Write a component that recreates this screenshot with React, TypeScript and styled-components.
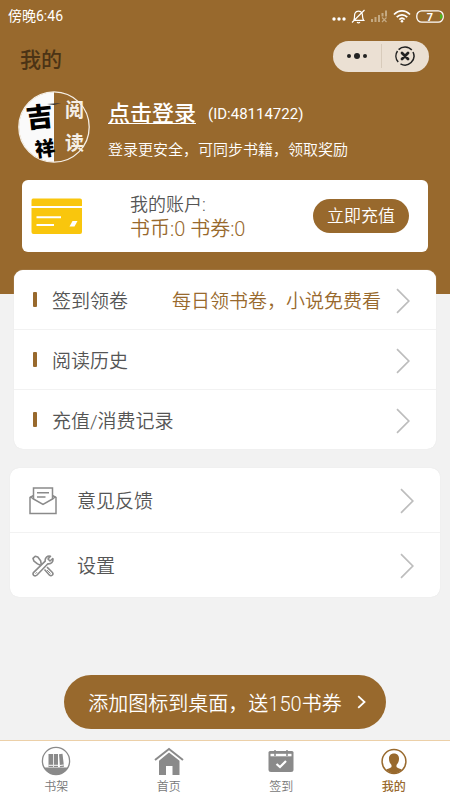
import React from "react";
import styled, { createGlobalStyle } from "styled-components";

const BROWN = "#98692d";
const PAGE = "#f2f2f2";
const GREY = "#8a8a8a";

const GlobalStyle = createGlobalStyle`
  * { box-sizing: border-box; }
  body {
    margin: 0;
    background: ${PAGE};
    font-family: Roboto, "Noto Sans CJK SC", sans-serif;
    color: #555;
  }
  button { font: inherit; color: inherit; border: 0; background: none; padding: 0; cursor: pointer; }
  a { color: inherit; text-decoration: none; }
  h1, p { margin: 0; font-weight: 400; }
  svg { display: block; flex: none; }
`;

const Page = styled.div`
  min-height: 100vh;
  display: flex;
  flex-direction: column;
`;

const Hero = styled.header`
  background: ${BROWN};
  color: #fff;
  padding-bottom: 42px;
`;

const StatusBar = styled.div`
  height: 32px;
  padding: 0 6px 0 8px;
  display: flex;
  align-items: center;
  justify-content: space-between;
  font-size: 14px;
  line-height: 20px;
`;

const StatusIcons = styled.div`
  display: flex;
  align-items: center;
  gap: 5px;
`;

const TitleBar = styled.div`
  height: 48px;
  padding: 0 21px 0 20px;
  display: flex;
  align-items: center;
  justify-content: space-between;
`;

const Title = styled.h1`
  && { font-size: 21px; font-weight: 500; }
  line-height: 28px;
  padding-top: 8px;
  color: #4b3315;
`;

const Capsule = styled.div`
  width: 96px;
  height: 31px;
  border-radius: 16px;
  background: #ebe0d3;
  display: flex;
  align-items: center;
`;

const CapsuleButton = styled.button<{ $divided?: boolean }>`
  && {
    flex: 1;
    height: 24px;
    display: flex;
    align-items: center;
    justify-content: center;
    border-right: ${(p) => (p.$divided ? "1px solid #d8cbbb" : "0")};
  }
`;

const Profile = styled.section`
  display: flex;
  align-items: center;
  gap: 18px;
  padding: 11px 18px 17px;
`;

const ProfileText = styled.div`
  flex: 1;
  min-width: 0;
  padding-top: 4px;
`;

const LoginLine = styled.div`
  display: flex;
  align-items: center;
  gap: 12px;
  font-size: 15px;
  line-height: 32px;
`;

const LoginLink = styled.a`
  && {
    text-decoration: underline;
    text-decoration-thickness: 1px;
    text-decoration-skip-ink: none;
    text-underline-offset: 2px;
  }
  font-size: 22px;
  font-weight: 500;
`;

const Hint = styled.p`
  && { font-weight: 350; }
  font-size: 15px;
  line-height: 20px;
  margin-top: 10px;
`;

const Account = styled.section`
  margin: 0 22px;
  min-height: 72px;
  padding: 0 19px 0 9px;
  border-radius: 6px;
  background: #fff;
  display: flex;
  align-items: center;
`;

const Balance = styled.div`
  flex: 1;
  padding: 2px 0 0 48px;
`;

const BalanceLine = styled.p<{ $strong?: boolean }>`
  && { font-weight: 350; }
  font-size: ${(p) => (p.$strong ? 20 : 18)}px;
  line-height: 25px;
  color: ${(p) => (p.$strong ? BROWN : "#555")};
`;

const Recharge = styled.button`
  && {
    width: 96px;
    height: 34px;
    border-radius: 17px;
    background: ${BROWN};
    color: #fff;
    font-size: 17px;
    font-weight: 350;
    line-height: 34px;
  }
`;

const List = styled.nav<{ $inset: number; $top: number }>`
  margin: ${(p) => p.$top}px ${(p) => p.$inset}px 0;
  border-radius: 9px;
  background: #fff;
  overflow: hidden;
  box-shadow: 0 0 1px #ddd;
`;

const Row = styled.a<{ $height: number }>`
  height: ${(p) => p.$height}px;
  padding: 2px 26px 0 19px;
  display: flex;
  align-items: center;
  font-size: 19px;
  font-weight: 350;
  line-height: 28px;
  & + & { border-top: 1px solid #f2f2f2; }
`;

const Mark = styled.span`
  width: 4px;
  height: 15px;
  margin: 0 15px 2px 0;
  border-radius: 1px;
  background: ${BROWN};
`;

const RowIcon = styled.span`
  width: 28px;
  margin-right: 20px;
  display: flex;
  justify-content: center;
`;

const RowLabel = styled.span`
  flex: 1;
  padding-top: 2px;
`;

const RowNote = styled.span`
  padding-top: 2px;
  margin-right: 15px;
  color: ${BROWN};
`;

const Shortcut = styled.button`
  && {
    align-self: center;
    height: 54px;
    margin: auto 0 11px;
    padding: 0 20px 0 24px;
    border-radius: 27px;
    background: ${BROWN};
    color: #fff;
    font-size: 20px;
    font-weight: 350;
    display: flex;
    align-items: center;
    gap: 15px;
  }
`;

const TabBar = styled.nav`
  height: 60px;
  border-top: 1px solid #ecd0a8;
  background: #fff;
  display: grid;
  grid-template-columns: repeat(4, 1fr);
`;

const Tab = styled.a<{ $active?: boolean }>`
  padding-top: 4px;
  display: flex;
  flex-direction: column;
  align-items: center;
  gap: 1px;
  font-size: 12px;
  line-height: 18px;
  font-weight: ${(p) => (p.$active ? 500 : 350)};
  color: ${(p) => (p.$active ? BROWN : "#777")};
`;

const BellOff = () => (
  <svg width="15" height="15" viewBox="0 0 15 15" fill="none" stroke="#fff" strokeWidth="1.2">
    <path d="M2.800 10.800C4 9.500 3 6.500 4 4.300Q5 2.200 7.500 2.200Q10 2.200 11 4.300C12 6.500 11 9.500 12.700 11.300H2.300M6 13.200Q7.500 14.500 9 13.200M1 13.500L13.500 1" />
  </svg>
);

const NoSignal = () => (
  <svg width="17" height="13" viewBox="0 0 17 13" fill="#c4a982">
    <path d="M0 9h2v3H0zM3.500 7h2v5h-2zM7 5h2v7H7zM10.500 3h2v3.500h-2zM14 0.500h2v6h-2z" />
    <path d="M11 7.500l4.500 4.500M15.500 7.500L11 12" stroke="#c4a982" strokeWidth="1.200" />
  </svg>
);

const Wifi = () => (
  <svg width="18" height="14" viewBox="0 0 18 14" fill="none" stroke="#fff" strokeWidth="1.700">
    <path d="M1 5.500C5.600 0.700 12.400 0.700 17 5.500M3.700 8.100C6.800 5 11.200 5 14.300 8.100M6.300 10.500C7.900 9 10.100 9 11.700 10.500" />
    <circle cx="9" cy="12.300" r="1.300" fill="#fff" stroke="none" />
  </svg>
);

const Battery = () => (
  <svg width="28" height="13" viewBox="0 0 28 13">
    <rect x="0.800" y="0.800" width="26.400" height="11.400" rx="5" fill="none" stroke="#fff" strokeWidth="1.300" />
    <path d="M24 4c2 0 2.500 1 2.500 2.500S26 9 24 9z" fill="#4cb81e" />
    <text x="14" y="10.500" fill="#fff" fontSize="11" fontWeight="700" textAnchor="middle">7</text>
  </svg>
);

const Dots = ({ big }: { big?: boolean }) =>
  big ? (
    <svg width="22" height="8" viewBox="0 0 22 8" fill="#222">
      <circle cx="3" cy="4" r="2" />
      <circle cx="11" cy="4" r="3" />
      <circle cx="19" cy="4" r="2" />
    </svg>
  ) : (
    <svg width="14" height="12" viewBox="0 0 14 12" fill="#fff">
      <circle cx="2" cy="9" r="1.700" />
      <circle cx="7" cy="9" r="1.700" />
      <circle cx="12" cy="9" r="1.700" />
    </svg>
  );

const CloseIcon = () => (
  <svg width="20" height="20" viewBox="0 0 20 20" fill="none" stroke="#222">
    <path d="M3.600 3.600A9 9 0 0 1 16.800 4M18 6A9 9 0 0 1 5.500 17.800M3.200 16A9 9 0 0 1 2.500 5" strokeWidth="1.500" />
    <path d="M7 7l6 6M13 7l-6 6" strokeWidth="2.800" strokeLinecap="round" />
  </svg>
);

const Avatar = () => (
  <svg width="72" height="72" viewBox="0 0 72 72" role="img" aria-label="吉祥阅读">
    <path d="M36 1A35 35 0 0 0 36 71Z" fill="#fafafa" />
    <circle cx="36" cy="36" r="35.200" fill="none" stroke="#f5efe6" strokeWidth="1.300" />
    <g fontFamily='"Noto Sans CJK SC", sans-serif' fontWeight="900">
      <text x="8" y="36" fontSize="27" fill="#000" transform="rotate(-6 20 26)">吉</text>
      <text x="17" y="65" fontSize="20" fill="#000" transform="rotate(-8 27 58)">祥</text>
    </g>
    <path d="M29 13L43 12L36 14Z" fill="#333" />
    <g fontFamily='"Noto Sans CJK SC", sans-serif' fontWeight="700" fontSize="19" fill="#f5efe6">
      <text x="47" y="26">阅</text>
      <text x="47" y="59">读</text>
    </g>
  </svg>
);

const CardIcon = () => (
  <svg width="51" height="36" viewBox="0 0 51 36">
    <path d="M2 0.500H49Q51 0.500 51 2.500V8H0.500V2.500Q0.500 0.500 2 0.500ZM0.500 10H51V34Q51 36 49 36H2.500Q0.500 36 0.500 34Z" fill="#f9c60d" />
    <path d="M5.500 19.200H30M5.500 27H23" stroke="#fff" strokeWidth="2" />
    <path d="M41.500 23H46.500L43.500 28.500H38.500Z" fill="#fff" />
  </svg>
);

const Chevron = () => (
  <svg width="14" height="26" viewBox="0 0 14 26" fill="none" stroke="#bdbdbd" strokeWidth="1.700">
    <path d="M1 1.200L12.800 13L1 24.800" />
  </svg>
);

const SmallChevron = () => (
  <svg width="9" height="14" viewBox="0 0 9 14" fill="none" stroke="#fff" strokeWidth="1.800">
    <path d="M1.200 1.200L7.500 7L1.200 12.800" />
  </svg>
);

const MailIcon = () => (
  <svg width="28" height="28" viewBox="0 0 28 28" fill="none" stroke={GREY} strokeWidth="1.500">
    <path d="M4.500 8.500L1 10.500V26.500H27V10.500L23.500 8.500M1 9.500L4.500 12M27 9.500L23.500 12" />
    <path d="M4.500 12V1H23.500V12L14 17.500Z" />
    <path d="M8 5.800H20M8 10H16.500" />
  </svg>
);

const ToolsIcon = () => (
  <svg width="22" height="22" viewBox="0 0 22 22" fill="none" stroke={GREY} strokeWidth="1.600" strokeLinejoin="round">
    <path d="M9.300 9.500L8.600 5.700L5.800 2L3.200 1.200L1 3.400L2 6.200L5.500 8.900L8.500 10.300M12.500 14.500L17.600 20.200Q19 21.400 20.400 20Q21.600 18.600 20.200 17.200L15 12.200" />
    <path d="M18.500 1.300C15.500 0.400 12.700 2.600 13.200 6.200L1.700 17.300Q0.300 19 1.800 20.400Q3.300 21.600 5 20L15.900 8.800C19.200 9.200 21.700 6.500 20.800 3.500L18 6L16 4Z" />
    <path d="M3.500 18.700L5 17.200M15 15l3.500 3.500" strokeWidth="1" />
  </svg>
);

const ShelfIcon = () => (
  <svg width="30" height="32" viewBox="0 0 30 32">
    <circle cx="15" cy="16" r="13.600" fill="none" stroke={GREY} strokeWidth="1.300" />
    <path d="M3 22.500H27A13.600 13.600 0 0 1 3 22.500Z" fill={GREY} />
    <path d="M7.500 9H12V22H7.500ZM12.800 9H17V22H12.800ZM18 9.200L21.500 8.700L23 21.700L19 22.200Z" fill={GREY} />
    <path d="M7.500 20.300H12M12.800 20.300H17M18.800 20.500L22.800 20" stroke="#fff" strokeWidth="1" />
  </svg>
);

const HomeIcon = () => (
  <svg width="30" height="32" viewBox="0 0 30 32">
    <path d="M1 15L15 4L29 15" fill="none" stroke={GREY} strokeWidth="2" />
    <path d="M15 7.500L25.500 15.800V30H18.500V21H12V30H5V15.800Z" fill={GREY} />
  </svg>
);

const CalendarIcon = () => (
  <svg width="30" height="32" viewBox="0 0 30 32">
    <path d="M4 6H26Q27.500 6 27.500 7.500V24.500Q27.500 27 25 27H5Q2.500 27 2.500 24.500V7.500Q2.500 6 4 6Z" fill={GREY} />
    <path d="M4.500 8.800H25.500V11.300H4.500Z" fill="#fff" />
    <path d="M9 5V11M21 5V11" stroke={GREY} strokeWidth="1.500" />
    <path d="M10.500 19L14 22L20 16" fill="none" stroke="#fff" strokeWidth="2.200" />
  </svg>
);

const PersonIcon = () => (
  <svg width="30" height="32" viewBox="0 0 30 32">
    <circle cx="15" cy="16.500" r="11.900" fill="none" stroke={BROWN} strokeWidth="1.500" />
    <path d="M15 8.500C11.500 8.500 9.800 11 10 14C10.100 16.500 11 18.500 12.500 20V22C11.500 23.300 8.500 23.500 7 24.800C11 29.300 19 29.300 23 24.800C21.500 23.500 18.500 23.300 17.500 22V20C19 18.500 19.900 16.500 20 14C20.200 11 18.500 8.500 15 8.500Z" fill={BROWN} />
  </svg>
);

const shortcuts = [
  { label: "签到领卷", note: "每日领书卷，小说免费看", height: 59 },
  { label: "阅读历史", height: 60 },
  { label: "充值/消费记录", height: 60 },
];

const tools = [
  { label: "意见反馈", icon: <MailIcon />, height: 64 },
  { label: "设置", icon: <ToolsIcon />, height: 65 },
];

const tabs = [
  { label: "书架", icon: <ShelfIcon /> },
  { label: "首页", icon: <HomeIcon /> },
  { label: "签到", icon: <CalendarIcon /> },
  { label: "我的", icon: <PersonIcon />, active: true },
];

export default function App() {
  return (
    <Page lang="zh-CN">
      <GlobalStyle />
      <Hero>
        <StatusBar>
          <span>傍晚6:46</span>
          <StatusIcons>
            <Dots />
            <BellOff />
            <NoSignal />
            <Wifi />
            <Battery />
          </StatusIcons>
        </StatusBar>
        <TitleBar>
          <Title>我的</Title>
          <Capsule>
            <CapsuleButton $divided aria-label="更多"><Dots big /></CapsuleButton>
            <CapsuleButton aria-label="关闭"><CloseIcon /></CapsuleButton>
          </Capsule>
        </TitleBar>
        <Profile>
          <Avatar />
          <ProfileText>
            <LoginLine>
              <LoginLink href="#login">点击登录</LoginLink>
              <span>(ID:48114722)</span>
            </LoginLine>
            <Hint>登录更安全，可同步书籍，领取奖励</Hint>
          </ProfileText>
        </Profile>
        <Account>
          <CardIcon />
          <Balance>
            <BalanceLine>我的账户:</BalanceLine>
            <BalanceLine $strong>书币:0 书券:0</BalanceLine>
          </Balance>
          <Recharge>立即充值</Recharge>
        </Account>
      </Hero>
      <List $inset={14} $top={-24}>
        {shortcuts.map((item) => (
          <Row key={item.label} href="#" $height={item.height}>
            <Mark />
            <RowLabel>{item.label}</RowLabel>
            {item.note && <RowNote>{item.note}</RowNote>}
            <Chevron />
          </Row>
        ))}
      </List>
      <List $inset={10} $top={19}>
        {tools.map((item) => (
          <Row key={item.label} href="#" $height={item.height}>
            <RowIcon>{item.icon}</RowIcon>
            <RowLabel>{item.label}</RowLabel>
            <Chevron />
          </Row>
        ))}
      </List>
      <Shortcut>
        <span>添加图标到桌面，送150书券</span>
        <SmallChevron />
      </Shortcut>
      <TabBar>
        {tabs.map((tab) => (
          <Tab key={tab.label} href="#" $active={tab.active}>
            {tab.icon}
            <span>{tab.label}</span>
          </Tab>
        ))}
      </TabBar>
    </Page>
  );
}
